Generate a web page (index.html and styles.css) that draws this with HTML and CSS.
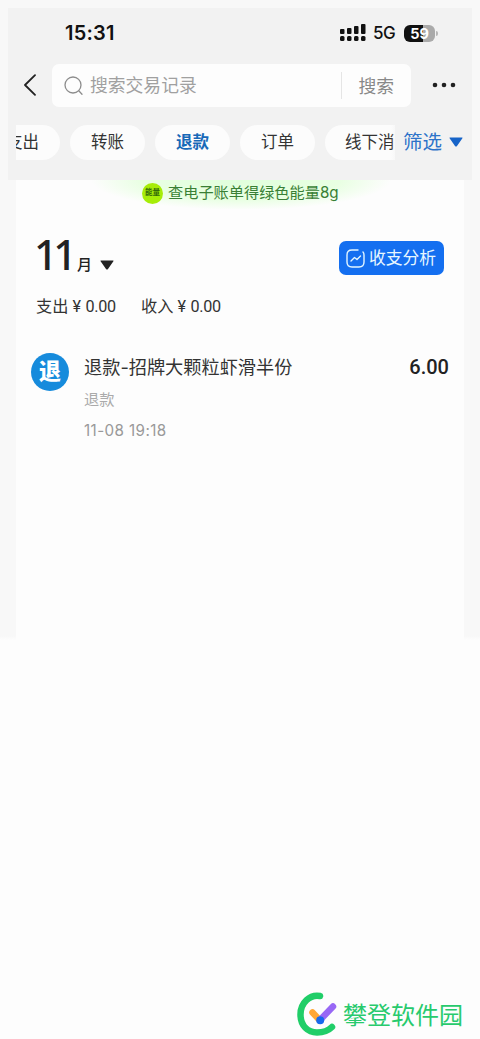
FILE: index.html
```html
<!DOCTYPE html>
<html lang="zh-CN">
<head>
<meta charset="utf-8">
<title>账单</title>
<link rel="stylesheet" href="styles.css">
</head>
<body>
<div class="page">
  <main class="screen">
    <header class="header">
      <div class="status">
        <span class="clock">15:31</span>
        <div class="indicators">
          <svg class="signal" width="26" height="18" viewBox="0 0 26 18" fill="#111"><rect x="0" y="5" width="4.500" height="5" rx="1"/><rect x="7" y="4" width="4.500" height="6" rx="1"/><rect x="14" y="2" width="4.500" height="8" rx="1"/><rect x="21" y="0" width="4.500" height="10" rx="1"/><rect x="0" y="12" width="4.500" height="5" rx="1.5"/><rect x="7" y="12" width="4.500" height="5" rx="1.5"/><rect x="14" y="12" width="4.500" height="5" rx="1.5"/><rect x="21" y="12" width="4.500" height="5" rx="1.5"/></svg>
          <span class="network">5G</span>
          <span class="battery">59</span>
          <span class="battery-tip"></span>
        </div>
      </div>
      <div class="searchbar">
        <svg class="back" width="14" height="22" viewBox="0 0 14 22" fill="none" stroke="#222" stroke-width="1.8" stroke-linecap="round" stroke-linejoin="round"><path d="M12 1.2 2 11l10 9.8"/></svg>
        <div class="search">
          <svg width="20" height="20" viewBox="0 0 20 20" fill="none" stroke="#8c8c8c" stroke-width="1.3" stroke-linecap="round"><circle cx="9" cy="9" r="8"/><path d="m15 15 3 3.2"/></svg>
          <span class="placeholder">搜索交易记录</span>
          <span class="search-button">搜索</span>
        </div>
        <svg class="more" width="24" height="6" viewBox="0 0 24 6" fill="#222"><circle cx="3" cy="3" r="2.3"/><circle cx="12" cy="3" r="2.3"/><circle cx="21" cy="3" r="2.3"/></svg>
      </div>
      <div class="filters">
        <div class="chips">
          <span class="chip">支出</span><span class="chip">转账</span><span class="chip chip-active">退款</span><span class="chip">订单</span><span class="chip">线下消</span>
        </div>
        <div class="filter">筛选<svg width="14" height="10" viewBox="0 0 14 10"><path d="M1 .5h12q1 0 .4.8L8 9q-1 1-2 0L.6 1.3Q0 .5 1 .5Z" fill="#1764c8"/></svg></div>
      </div>
    </header>
    <section class="sheet">
      <div class="banner">
        <span class="energy">能量</span><span class="banner-text">查电子账单得绿色能量8g</span>
      </div>
      <div class="month-row">
        <div class="month"><span class="month-number">11</span><span class="month-unit">月</span><svg width="14" height="10" viewBox="0 0 14 10"><path d="M1 .5h12q1 0 .4.8L8 9q-1 1-2 0L.6 1.3Q0 .5 1 .5Z" fill="#222"/></svg></div>
        <div class="analysis"><svg width="20" height="19" viewBox="0 0 20 19" fill="none" stroke="#e2f6ff" stroke-width="1.4" stroke-linecap="round" stroke-linejoin="round"><path d="M12 1H6Q1 1 1 6v7q0 5 5 5h7q5 0 5-5V6q0-2-1-3"/><path d="m5 12 3.5-3.5 2.5 2L14.5 7"/></svg><span>收支分析</span></div>
      </div>
      <div class="totals"><span class="total">支出<i>¥</i><b>0.00</b></span><span class="total">收入<i>¥</i><b>0.00</b></span></div>
      <article class="record">
        <div class="avatar">退</div>
        <div class="details">
          <div class="title">退款-招牌大颗粒虾滑半份</div>
          <div class="category">退款</div>
          <div class="date">11-08 19:18</div>
        </div>
        <div class="amount">6.00</div>
      </article>
    </section>
  </main>
  <footer class="brand">
    <svg width="42" height="45" viewBox="0 0 42 45" fill="none" stroke-linecap="round"><path d="M24 4C14 2 4.500 11 4.500 22.500C4.500 34 12 40.500 21 40.500C28 40.500 32 39 36 35" stroke="#20ce68" stroke-width="6.500"/><path d="m16.500 20.500 7 7.500" stroke="#ffa735" stroke-width="6.500"/><path d="m24.500 27.500 12.500-13" stroke="#9868f5" stroke-width="6.500"/><circle cx="24.200" cy="28.300" r="4" fill="#1769ed"/></svg>
    <span>攀登软件园</span>
  </footer>
</div>
</body>
</html>
```
FILE: styles.css
```css
* { box-sizing: border-box; }
body { margin: 0; background: #fdfdfd; color: #333; font-family: Inter, "Noto Sans CJK SC", sans-serif; }
svg { display: block; flex: none; }
.page { width: 480px; height: 1039px; display: flex; flex-direction: column; justify-content: space-between; overflow: hidden; }
.screen { height: 640px; padding: 8px 8px 0; background: linear-gradient(#f8f8f8 0 636px, #fdfdfd 640px); }
.header { height: 172px; background: #f2f2f2; }
.status { height: 56px; padding: 11px 34px 0 57px; display: flex; justify-content: space-between; align-items: flex-start; }
.clock { font-size: 20px; line-height: 29px; font-weight: 600; color: #111; letter-spacing: .2px; }
.indicators { height: 28px; display: flex; align-items: center; }
.network { margin-left: 7px; width: 31px; font-size: 17px; line-height: 28px; font-weight: 500; color: #111; letter-spacing: -.5px; }
.battery { width: 31px; height: 17px; border-radius: 6px; background: linear-gradient(90deg, #111 60%, #aaa 60%); color: #fff; font-size: 14.5px; line-height: 17px; font-weight: 700; text-align: center; }
.battery-tip { width: 2px; height: 5px; margin-left: 1px; border-radius: 0 2px 2px 0; background: #b7b7b7; }
.searchbar { height: 43px; padding: 0 16px 0 15px; display: flex; align-items: center; }
.back, .more { margin-bottom: 2px; }
.search { width: 359px; height: 43px; margin-left: 15px; margin-right: 21px; padding: 0 17px 0 12px; border-radius: 7px; background: #fdfdfd; display: flex; align-items: center; font-size: 17.8px; color: #a0a0a0; }
.placeholder { margin-left: 6px; padding-bottom: 3px; }
.search-button { height: 27px; margin-left: auto; padding-left: 16px; border-left: 1px solid #e5e5e5; line-height: 29px; color: #888; }
.filters { height: 54px; margin-top: 8px; padding: 0 8px; display: flex; align-items: center; }
.chips { width: 379px; display: flex; gap: 10px; overflow: hidden; }
.chip { flex: none; width: 75px; height: 35px; border-radius: 18px; background: #fcfcfc; text-align: center; font-size: 16.5px; line-height: 34px; }
.chip:first-child { margin-left: -31px; }
.chip:last-child { width: 110px; padding-left: 20px; text-align: left; }
.chip-active { color: #1769b8; font-weight: 700; }
.filter { display: flex; align-items: center; gap: 7px; margin-left: -4px; padding-left: 12px; color: #2d73c9; font-size: 19.5px; line-height: 35px; background: linear-gradient(90deg, #f2f2f200, #f2f2f2 10px); }
.sheet { height: 460px; margin: 0 8px; background: #fdfdfd; }
.banner { width: 300px; height: 29px; margin-left: 75px; padding: 0 0 3px 51px; display: flex; align-items: center; background: radial-gradient(ellipse 150px 30px at 50% 0, #e0ffdc 0, #e8ffe2 65%, #fdfdfd 100%); }
.energy { width: 21px; height: 21px; flex: none; border-radius: 50%; background: #a6ed08; color: #326a08; font-size: 7.5px; line-height: 20px; font-weight: 700; text-align: center; }
.banner-text { margin-left: 5px; color: #397f35; font-size: 15.2px; line-height: 22px; white-space: nowrap; }
.month-row { height: 78px; padding: 32px 20px 0; display: flex; justify-content: space-between; align-items: flex-start; }
.month { display: flex; align-items: baseline; color: #222; margin-top: -3px; }
.month-number { width: 43px; margin-left: -2px; font-family: "Noto Sans", sans-serif; font-size: 41.5px; line-height: 32px; letter-spacing: -4.5px; font-weight: 500; }
.month-unit { margin-right: 8px; font-size: 15px; line-height: 18px; font-weight: 500; }
.analysis { width: 105px; height: 34px; padding: 0 7px; border-radius: 7px; background: #146ff0; color: #e7f7ff; display: flex; align-items: center; gap: 3px; font-size: 16.8px; line-height: 32px; white-space: nowrap; }
.totals { height: 40px; padding-left: 20px; display: flex; gap: 25px; font-size: 16.2px; line-height: 39px; }
.total { width: 80px; display: flex; }
.total i { width: 17px; font-family: Roboto, sans-serif; font-style: normal; text-align: center; }
.total b { font-family: Roboto, sans-serif; font-weight: 400; letter-spacing: -.3px; }
.record { padding: 26px 15px 0; display: flex; }
.avatar { width: 38px; height: 38px; border-radius: 50%; background: #168bdc; color: #fff; font-size: 22px; line-height: 37px; font-weight: 900; text-align: center; }
.details { flex: 1; padding-left: 15px; }
.title { font-size: 18.2px; line-height: 29px; white-space: nowrap; color: #333; }
.category { margin-top: 5px; font-size: 15.2px; line-height: 25px; color: #aaa; }
.date { margin-top: 7px; font-size: 15.2px; line-height: 24px; color: #999; letter-spacing: .4px; }
.amount { font-family: Roboto, sans-serif; font-size: 20px; line-height: 29px; font-weight: 500; color: #222; }
.brand { height: 50px; padding: 3px 0 0 296px; display: flex; gap: 5px; color: #28ca6d; font-size: 24px; line-height: 47px; white-space: nowrap; }
```
